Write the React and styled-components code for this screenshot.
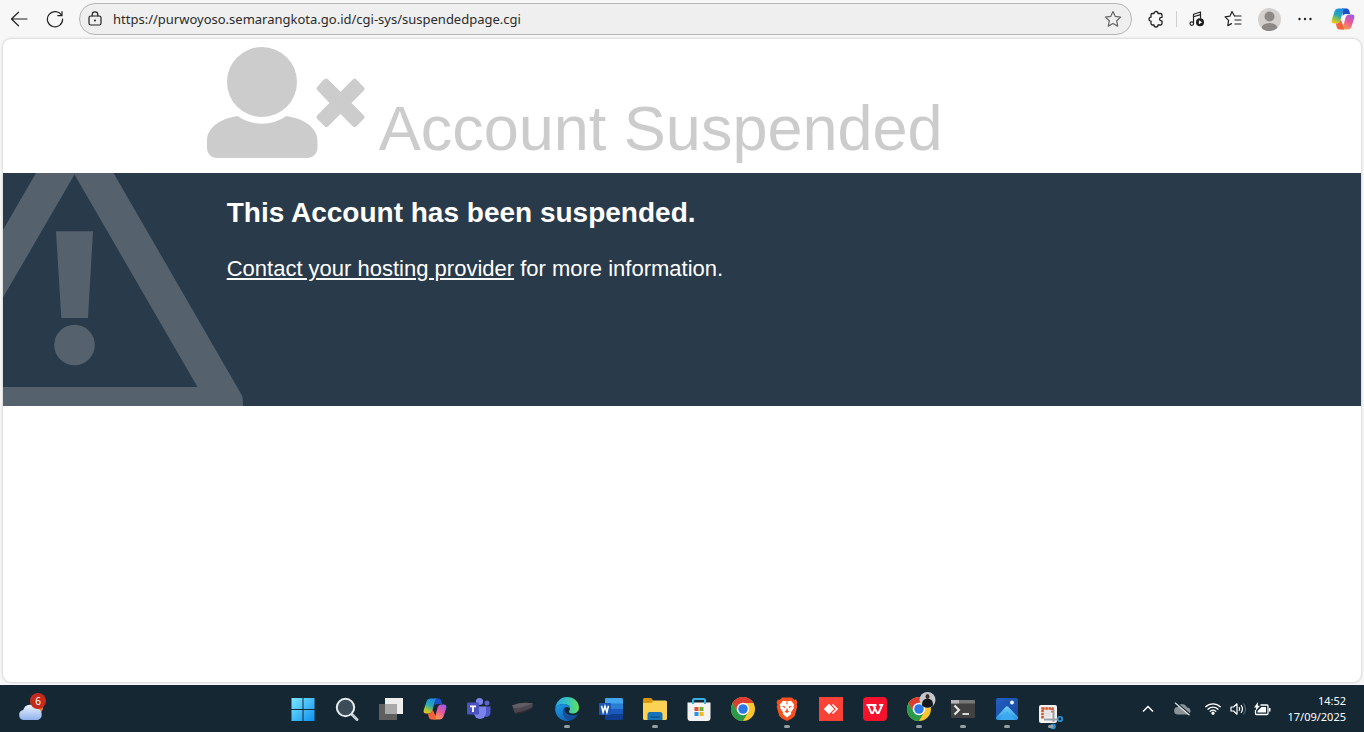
import React, { useState } from 'react';
import styled, { createGlobalStyle } from 'styled-components';

// Global style
const GlobalStyle = createGlobalStyle`
  * {
    box-sizing: border-box;
  }
  body {
    margin: 0;
    background-color: #f7f7f7;
    font-family: 'Liberation Sans', Arial, sans-serif;
  }
  svg {
    display: block;
    flex-shrink: 0;
  }
`;

// Styled components
const Desktop = styled.div`
  display: flex;
  flex-direction: column;
  min-height: 100vh;
`;

const Toolbar = styled.header`
  display: flex;
  align-items: center;
  height: 38px;
  padding: 0 1px 0 5px;
`;

const ToolButton = styled.button`
  display: flex;
  align-items: center;
  justify-content: center;
  width: ${({ $width }) => $width || 36}px;
  height: 28px;
  padding: 0;
  border: none;
  border-radius: 4px;
  background: none;
  color: #222;
  flex-shrink: 0;
`;

const AddressBar = styled.div`
  display: flex;
  align-items: center;
  flex: 1;
  height: 32px;
  margin: 0 6px 0 2px;
  padding: 0 4px 0 0;
  border: 1px solid #b5b5b5;
  border-radius: 16px;
  background-color: #efefef;
`;

const AddressInput = styled.input`
  flex: 1;
  min-width: 0;
  padding: 0 0 0 3px;
  border: none;
  outline: none;
  background: none;
  color: #2b2b2b;
  font-family: 'Noto Sans', 'Open Sans', sans-serif;
  font-size: 13px;
`;

const Divider = styled.span`
  width: 1px;
  height: 16px;
  margin: 0 2px;
  background-color: #cfcfcf;
`;

const PageCard = styled.main`
  flex: 1;
  margin: 1px 3px 3px;
  overflow: hidden;
  border-radius: 8px;
  background-color: #fff;
  box-shadow: 0 0 3px rgba(0, 0, 0, 0.25);
`;

const PageHead = styled.div`
  display: flex;
  align-items: flex-end;
  gap: 13px;
  height: 134px;
  padding: 0 15% 15px;
  color: #ccc;
`;

const PageTitle = styled.h1`
  margin: 0;
  font-size: 63px;
  font-weight: 400;
  line-height: 60px;
  white-space: nowrap;
`;

const InfoBand = styled.section`
  position: relative;
  min-height: 233px;
  padding: 24px 15% 24px;
  overflow: hidden;
  background-color: #293a4a;
  color: #fff;
`;

const WarningMark = styled.svg`
  position: absolute;
  left: 0;
  top: 0;
`;

const InfoText = styled.div`
  position: relative;
  padding-left: 20px;
`;

const InfoHeading = styled.h2`
  margin: 0 0 24px;
  font-size: 28px;
  line-height: 32px;
`;

const InfoLine = styled.p`
  margin: 0;
  font-size: 22px;
  line-height: 32px;
`;

const HostLink = styled.a`
  color: #fff;
  text-decoration: underline;
`;

const Taskbar = styled.footer`
  display: grid;
  grid-template-columns: 1fr auto 1fr;
  align-items: center;
  height: 47px;
  padding: 0 18px 0 16px;
  background-color: #142733;
`;

const WeatherButton = styled.button`
  justify-self: start;
  padding: 0;
  border: none;
  background: none;
`;

const AppList = styled.nav`
  display: flex;
  margin-right: 8px;
`;

const AppButton = styled.button`
  display: flex;
  flex-direction: column;
  align-items: center;
  gap: 4px;
  width: 44px;
  height: 47px;
  padding: 12px 0 0;
  border: none;
  background: none;

  &::after {
    content: '';
    width: 6px;
    height: 3px;
    border-radius: 2px;
    background-color: ${({ $running }) => ($running ? '#95a0a6' : 'transparent')};
  }
`;

const Tray = styled.div`
  display: flex;
  align-items: center;
  justify-self: end;
`;

const TrayButton = styled.button`
  display: flex;
  align-items: center;
  justify-content: center;
  width: ${({ $width }) => $width || 24}px;
  height: 32px;
  padding: 0;
  border: none;
  background: none;
`;

const Clock = styled.time`
  margin-left: 13px;
  color: #fff;
  font-family: 'Noto Sans', 'Open Sans', sans-serif;
  font-size: 11px;
  line-height: 16px;
  text-align: right;
`;

// Toolbar icons
const Line = ({ size = 18, width = size, height = size, box, children }) => (
  <svg
    width={width}
    height={height}
    viewBox={box || `0 0 ${width} ${height}`}
    fill="none"
    stroke="currentColor"
    strokeWidth="1.2"
    strokeLinecap="round"
    strokeLinejoin="round"
  >
    {children}
  </svg>
);

const BackIcon = () => (
  <Line>
    <path d="M17 9H1.5M8.500 2.200L1.500 9l7 6.800" />
  </Line>
);

const ReloadIcon = () => (
  <Line>
    <path d="M15.600 5.500A7.600 7.600 0 1 0 16.600 9M16 1.500v4.200h-4.200" />
  </Line>
);

const LockIcon = () => (
  <Line width={14} height={16}>
    <rect x="1" y="5" width="12" height="9" rx="1.800" />
    <path d="M4.200 5V3.600a2.800 2.800 0 0 1 5.600 0V5" />
    <circle cx="7" cy="9.500" r="1" fill="currentColor" stroke="none" />
  </Line>
);

const StarIcon = () => (
  <Line>
    <path
      stroke="#666"
      d="M9 1.500l2.300 4.900 5.300.7-3.900 3.700 1 5.300L9 13.500l-4.700 2.600 1-5.300L1.400 7.100l5.300-.7z"
    />
  </Line>
);

// pieces bulge out at the top and bottom, and bite in at the right
const ExtensionIcon = () => (
  <Line>
    <path
      strokeWidth="1.300"
      d="M7 3.500a2 2 0 0 1 4 0h2.500A1.500 1.500 0 0 1 15 5v2.300h-.6a1.800 1.800 0 0 0 0 3.600h.6v2.600a1.500 1.500 0 0 1-1.500 1.500H11a2 2 0 0 1-4 0H5.500A1.500 1.500 0 0 1 4 13.500v-2.300a2 2 0 0 1 0-4V5a1.500 1.500 0 0 1 1.500-1.500z"
    />
  </Line>
);

const MediaIcon = () => (
  <Line>
    <path d="M5.500 13V4.200L12.500 2v6M5.500 6.800l7-2.200" />
    <circle cx="3.800" cy="13.600" r="1.800" />
    <circle cx="12" cy="12.200" r="4" fill="#1c1c1c" stroke="none" />
    <path d="M10.900 10.200v4l3.200-2z" fill="#fff" stroke="none" />
  </Line>
);

const FavoritesIcon = () => (
  <Line>
    <path d="M10.500 6L8 1.500 5.900 6.200l-4.800.7 3.500 3.500-.8 5.200L7.500 13.600M10.500 6h6.500M11 10h6M11 14h6" />
  </Line>
);

const AvatarIcon = () => (
  <svg width="23" height="23" viewBox="0 0 23 23">
    <clipPath id="avatarClip">
      <circle cx="11.500" cy="11.500" r="11.500" />
    </clipPath>
    <g clipPath="url(#avatarClip)">
      <rect width="23" height="23" fill="#d3d0cd" />
      <circle cx="11.500" cy="8.500" r="5" fill="#8b8885" />
      <ellipse cx="11.500" cy="20.500" rx="8" ry="5.500" fill="#8b8885" />
    </g>
  </svg>
);

const MoreIcon = () => (
  <svg width="16" height="4" viewBox="0 0 16 4" fill="#222">
    <circle cx="2.500" cy="2" r="1.200" />
    <circle cx="8" cy="2" r="1.200" />
    <circle cx="13.500" cy="2" r="1.200" />
  </svg>
);

const CopilotIcon = ({ id }) => (
  <svg width="24" height="24" viewBox="0 0 24 24">
    <defs>
      <linearGradient id={`${id}a`} x1="0.600" y1="0" x2="0.200" y2="1">
        <stop offset="0" stopColor="#1b8ee8" />
        <stop offset="0.450" stopColor="#2ba7b5" />
        <stop offset="0.700" stopColor="#8bc34a" />
        <stop offset="1" stopColor="#f4c81f" />
      </linearGradient>
      <linearGradient id={`${id}b`} x1="0.800" y1="0" x2="0.300" y2="1">
        <stop offset="0" stopColor="#9a5cf0" />
        <stop offset="0.450" stopColor="#e8569c" />
        <stop offset="1" stopColor="#ff9a4a" />
      </linearGradient>
    </defs>
    <path d="M11 1.500h4.500c1.500 0 2.200.8 2.700 2.200l1 3.300h-4.500c-1.500 0-2.400.8-2.900 2.200z" fill="#1a50c8" />
    <path d="M7.500 1.500h6.800c-1.400.3-2 1.100-2.400 2.500L9.700 12.500c-.7 2.700-1.800 4-4.300 4H3.200c-2.300 0-3-1.600-2.400-3.800L3.500 4.500c.7-2 2-3 4-3z" fill={`url(#${id}a)`} />
    <path d="M16.500 22.500H9.700c1.400-.3 2-1.100 2.400-2.500l2.200-8.500c.7-2.700 1.800-4 4.300-4h2.200c2.300 0 3 1.600 2.400 3.800l-2.700 8.200c-.7 2-2 3-4 3z" fill={`url(#${id}b)`} />
    <path d="M13 22.500H8.500c-1.500 0-2.200-.8-2.700-2.200l-1-3.800h1c2.200 0 3.200-1.400 3.900-4l2.600 6z" fill="#f0643c" />
  </svg>
);

// Drawings on the suspended page
const UserTimesIcon = () => (
  <svg width="159" height="111" viewBox="0 0 159 111" fill="#ccc">
    <circle cx="55" cy="35" r="35" />
    <path d="M30.500 69A43 43 0 0 0 79.500 69C98 72 110.500 81 110.500 94v6.500c0 6-4.500 10.500-10.500 10.500H10C4 111 0 106.500 0 100.500V94c0-13 12-22 30.500-25z" />
    <path d="M117.500 32.600a3 3 0 0 0-.8 0l-6.300 7.100a2.500 2.500 0 0 0 0 3.600L122.500 56l-12.200 12.300a2.500 2.500 0 0 0 0 3.600l7.300 7.300a2.500 2.500 0 0 0 3.600 0L133.500 67l12.300 12.200a2.500 2.500 0 0 0 3.600 0l7.300-7.300a2.500 2.500 0 0 0 0-3.600L144.500 56l12.200-12.300a2.500 2.500 0 0 0 0-3.600l-7.300-7.600a2.500 2.500 0 0 0-3.600 0L133.500 44.800 121.200 32.600a2.500 2.500 0 0 0-3.700 0z" />
  </svg>
);

const WarningIcon = () => (
  <WarningMark width="241" height="233" viewBox="0 0 241 233" fill="#55626e">
    <path
      fillRule="evenodd"
      d="M33 0h77.500L239 222.500q1 3 1 10.500H0v-19h194.500L71.500 1.500 0 124.500V57z"
    />
    <path d="M53 58.300h37L85 145H58.300z" />
    <circle cx="71.500" cy="172" r="20.300" />
  </WarningMark>
);

// Taskbar drawings
const WeatherIcon = () => (
  <svg width="32" height="32" viewBox="0 0 32 32">
    <defs>
      <linearGradient id="cloud" x1="0" y1="0" x2="0" y2="1">
        <stop offset="0" stopColor="#eef4ff" />
        <stop offset="1" stopColor="#8fb2ec" />
      </linearGradient>
    </defs>
    <circle cx="22" cy="15" r="5" fill="#f0792b" />
    <path d="M8 27a5 5 0 0 1-.8-9.900A7.500 7.500 0 0 1 21 15.600 6 6 0 0 1 22 27z" fill="url(#cloud)" />
    <circle cx="22" cy="8" r="8" fill="#c42b1c" />
    <text x="22" y="12" fill="#fff" fontSize="10" fontFamily="Noto Sans" textAnchor="middle">
      6
    </text>
  </svg>
);

const StartIcon = () => (
  <svg width="24" height="24" viewBox="0 0 24 24">
    <linearGradient id="start" x1="0" y1="0" x2="24" y2="24" gradientUnits="userSpaceOnUse">
      <stop offset="0" stopColor="#7eeaff" />
      <stop offset="1" stopColor="#0c8ff0" />
    </linearGradient>
    <path d="M.5 1h11v11h-11zM12.500 1h11v11h-11zM.5 13h11v11h-11zM12.500 13h11v11h-11z" fill="url(#start)" />
  </svg>
);

const SearchIcon = () => (
  <svg width="24" height="24" viewBox="0 0 24 24">
    <path d="M17 17.500l5 5" stroke="#c5ccd2" strokeWidth="3" strokeLinecap="round" />
    <circle cx="10.500" cy="10.500" r="8.700" fill="#3c4c58" stroke="#e6ebef" strokeWidth="2" />
  </svg>
);

const TaskViewIcon = () => (
  <svg width="24" height="24" viewBox="0 0 24 24">
    <path d="M6 1h18v16H6z" fill="#eee" />
    <path d="M0 7h18v16H0z" fill="#5f5f5f" />
    <path d="M6 7h12v10H6z" fill="#a9a9a9" />
  </svg>
);

const TeamsIcon = () => (
  <svg width="24" height="24" viewBox="0 0 24 24">
    <circle cx="20" cy="6" r="2.500" fill="#5b62c8" />
    <circle cx="12.500" cy="4.500" r="3.600" fill="#7b83eb" />
    <path d="M17 9.500h6.500V16a4 4 0 0 1-6.500 3z" fill="#5059c9" />
    <path d="M7 9.500h12V16a6 6 0 0 1-12 0z" fill="#7b83eb" />
    <rect y="5.500" width="12" height="12" rx="1" fill="#4b53bc" />
    <path d="M3 8.500h6v1.700H6.900V15H5.100v-4.800H3z" fill="#fff" />
  </svg>
);

const LensIcon = () => (
  <svg width="24" height="24" viewBox="0 0 24 24">
    <path d="M1 8.500Q10 4.500 22 6.500l-1 4.500-8 3.500-9 2z" fill="#4a454e" />
    <path d="M1 8.500Q10 4.500 22 6.500L10 10.500 3 11z" fill="#625c66" />
    <path d="M4 16l9-2 8-3.500-1 2.500-8 3-7 1.500z" fill="#2b2a32" />
  </svg>
);

const EdgeIcon = () => (
  <svg width="24" height="24" viewBox="0 0 24 24">
    <defs>
      <linearGradient id="edgeTop" x1="0" y1="0.500" x2="1" y2="0.500">
        <stop offset="0" stopColor="#2aa5e2" />
        <stop offset="0.500" stopColor="#36c4c4" />
        <stop offset="1" stopColor="#62e05c" />
      </linearGradient>
      <linearGradient id="edgeLow" x1="0" y1="0" x2="0.600" y2="1">
        <stop offset="0" stopColor="#1b9de2" />
        <stop offset="1" stopColor="#1068be" />
      </linearGradient>
    </defs>
    <path d="M.3 11C1 4.800 5.700 0 12 0c7 0 12 5 12 10.500 0 4-3 6-6.500 6-2.500 0-3.500-1-3.500-2 0-.8 1-1.200 1-3 0-2.500-2.800-4.500-6.500-4.500C4.800 7 2 8.500.3 11z" fill="url(#edgeTop)" />
    <path d="M.3 11C2 8.500 4.800 7 8.500 7c3.700 0 6.500 2 6.500 4.500-1-1-2.400-1.500-4-1.500-2 1-3 2.700-3 5 0 4 3 7.500 7 8.600-1 .3-2 .4-3 .4C5 24-.5 18 .3 11z" fill="url(#edgeLow)" />
    <path d="M11 10c-2 1-3 2.700-3 5 0 4 3 7.500 7 8.600 3.300-.8 6-3 7.500-5.600.3-.6-.2-.9-.7-.6-1.300.6-2.500.8-4 .8-4.500 0-8-2.500-8-6 0-.8.500-1.700 1.200-2.200z" fill="#124f9c" />
  </svg>
);

const WordIcon = () => (
  <svg width="24" height="24" viewBox="0 0 24 24">
    <path d="M7 1h15.500A1.500 1.500 0 0 1 24 2.500V7H6V2a1 1 0 0 1 1-1z" fill="#41a5ee" />
    <path d="M6 6.500h18V12H6z" fill="#2b7cd3" />
    <path d="M6 12h18v5.500H6z" fill="#185abd" />
    <path d="M6 17.500h18v4a1.500 1.500 0 0 1-1.500 1.500H7a1 1 0 0 1-1-1z" fill="#103f91" />
    <rect y="6" width="12" height="12" rx="1" fill="#1a56b0" />
    <path d="M2.500 8.800l1.600 6.400L6 9.300l1.900 5.900 1.600-6.400" fill="none" stroke="#fff" strokeWidth="1.600" />
  </svg>
);

const FolderIcon = () => (
  <svg width="24" height="24" viewBox="0 0 24 24">
    <path d="M0 2.500A1.500 1.500 0 0 1 1.500 1H8l2.500 2.500V8H0z" fill="#d9960f" />
    <path d="M0 6h8.500l2-2.500h12A1.500 1.500 0 0 1 24 5v16.500a1.500 1.500 0 0 1-1.500 1.500h-21A1.500 1.500 0 0 1 0 21.500z" fill="#fcd255" />
    <path d="M4.500 23v-5.500A2.500 2.500 0 0 1 7 15h10a2.500 2.500 0 0 1 2.500 2.500V23z" fill="#1673b8" />
    <path d="M7.500 19h9v2h-9z" fill="#0f5a98" />
  </svg>
);

const StoreIcon = () => (
  <svg width="24" height="24" viewBox="0 0 24 24">
    <path d="M6 7V3.500A1.500 1.500 0 0 1 7.500 2h9A1.500 1.500 0 0 1 18 3.500V7" fill="none" stroke="#35b1e8" strokeWidth="2" />
    <path d="M.5 5.500h23V21a3 3 0 0 1-3 3h-17a3 3 0 0 1-3-3z" fill="#f3f3f3" />
    <path d="M6 2.500V7M18 2.500V7" stroke="#35b1e8" strokeWidth="2" />
    <path d="M7.500 10h4v4h-4z" fill="#e0502c" />
    <path d="M12.500 10h4v4h-4z" fill="#74b02c" />
    <path d="M7.500 15h4v4h-4z" fill="#2795e0" />
    <path d="M12.500 15h4v4h-4z" fill="#f5b81f" />
  </svg>
);

const ChromeShape = () => (
  <>
    <circle cx="12" cy="12" r="12" fill="#fbc52d" />
    <path d="M1.600 6A12 12 0 0 0 12 24l5.200-9L12 12 6.800 15z" fill="#2a9a4a" />
    <path d="M1.600 6L6.500 14 12 6z" fill="#2a9a4a" />
    <path d="M12 6H1.600A12 12 0 0 1 22.400 6z" fill="#dd3d31" />
    <path d="M1.600 6l3.600 6.200L12 6z" fill="#dd3d31" />
    <circle cx="12" cy="12" r="6.200" fill="#fff" />
    <circle cx="12" cy="12" r="4.800" fill="#2e78e6" />
  </>
);

const ChromeIcon = () => (
  <svg width="24" height="24" viewBox="0 0 24 24">
    <ChromeShape />
  </svg>
);

const ChromeProfileIcon = () => (
  <svg width="24" height="24" viewBox="0 0 24 24" overflow="visible">
    <ChromeShape />
    <circle cx="20.500" cy="3" r="8" fill="#c3c8cc" />
    <path d="M15 8.500c0-4 1-6 3.500-6.500h4c2.500.5 3.500 2.500 3.500 6.500a8 8 0 0 1-11 0z" fill="#15161a" />
    <ellipse cx="20.500" cy="-.5" rx="2" ry="2.500" fill="#3a2c28" />
  </svg>
);

const BraveIcon = () => (
  <svg width="24" height="24" viewBox="0 0 24 24">
    <path d="M7 .5h10l2 2.200 2.200-.2 1.300 3-.8 2 .6 2.200-2.600 9.300-2.700 2.500L12 24l-5-2.500L4.300 19 1.700 9.700l.6-2.200-.8-2 1.300-3 2.200.2z" fill="#f4511e" />
    <path d="M12 4.500l4-.8 3.200 3.800-.7 2.300.4 1.200-3 4.500.4 1.600L12 20.500l-4.300-3.400.4-1.600-3-4.500.4-1.200-.7-2.300L8 3.700z" fill="#fff" />
    <path d="M6.800 8.800l3.600.8-.8 1.700zM17.200 8.800l-3.600.8.8 1.700zM12 10.500l1 3.200 1.500.8L12 16l-2.500-1.500 1.500-.8zM11 5.500h2L12 8z" fill="#f4511e" />
  </svg>
);

const AnyDeskIcon = () => (
  <svg width="24" height="24" viewBox="0 0 24 24">
    <path d="M0 0h24v24H0z" fill="#fb4237" />
    <path d="M10 6.800l5.200 5.200-5.200 5.200L4.800 12z" fill="#fff" />
    <path d="M13.500 7.500L18 12l-4.500 4.500" fill="none" stroke="#fff" strokeWidth="1.600" />
  </svg>
);

const WpsIcon = () => (
  <svg width="24" height="24" viewBox="0 0 24 24">
    <rect width="24" height="24" rx="4" fill="#f5122c" />
    <path d="M3.500 8h10M5 8l3.400 8h1.400l2.700-6.500M10 8l4.200 8h1.400l3.600-8H16" fill="none" stroke="#fff" strokeWidth="1.900" />
  </svg>
);

const TerminalIcon = () => (
  <svg width="24" height="24" viewBox="0 0 24 24">
    <rect y="3" width="24" height="18" rx="1" fill="#414141" />
    <path d="M0 4a1 1 0 0 1 1-1h22a1 1 0 0 1 1 1v2.500H0z" fill="#777" />
    <path d="M0 3h8v3.500H0z" fill="#b5b5b5" />
    <path d="M3.500 8.500L8 13l-4.500 4.500" fill="none" stroke="#ececec" strokeWidth="2" />
    <path d="M11.500 17h6.500" stroke="#ececec" strokeWidth="1.800" />
  </svg>
);

const PhotosIcon = () => (
  <svg width="24" height="24" viewBox="0 0 24 24">
    <defs>
      <linearGradient id="photo" x1="0" y1="0" x2="1" y2="1">
        <stop offset="0" stopColor="#235fc4" />
        <stop offset="1" stopColor="#1a4697" />
      </linearGradient>
      <linearGradient id="photoHill" x1="0" y1="0" x2="0" y2="1">
        <stop offset="0" stopColor="#6fd4fa" />
        <stop offset="1" stopColor="#2a8fe0" />
      </linearGradient>
    </defs>
    <rect x="1" y="1" width="22" height="22" rx="2" fill="url(#photo)" />
    <path d="M1 20.500L10.500 10q1.500-1.500 3 0L23 20v1a2 2 0 0 1-2 2H3a2 2 0 0 1-2-2z" fill="url(#photoHill)" />
    <path d="M4 23l8-8.500L20.500 23z" fill="#3aa9ee" />
    <circle cx="17" cy="5.500" r="2" fill="#eaf4ff" />
  </svg>
);

const SnippingIcon = () => (
  <svg width="24" height="24" viewBox="0 0 24 24" overflow="visible">
    <rect x="0" y="8" width="18" height="18" rx="2" fill="#f2f2f2" />
    <path d="M3.500 21.500v-10h10v4" fill="none" stroke="#d5532b" strokeWidth="2.600" strokeDasharray="2.600 .6" />
    <path d="M5 13h7v7H5z" fill="#e4e4e4" />
    <path d="M14.500 13v12M5 22.500h14" stroke="#9aa1a6" strokeWidth="2" />
    <circle cx="21" cy="22" r="2.200" fill="none" stroke="#2b9be0" strokeWidth="1.600" />
    <circle cx="14" cy="29.500" r="2" fill="none" stroke="#2b9be0" strokeWidth="1.600" />
  </svg>
);

// Tray icons
const ChevronIcon = () => (
  <svg width="12" height="8" viewBox="0 0 12 8">
    <path d="M1 6.500l5-5 5 5" fill="none" stroke="#fff" strokeWidth="1.500" />
  </svg>
);

const CloudOffIcon = () => (
  <svg width="17" height="14" viewBox="0 0 17 14">
    <path d="M4 12.500a3.700 3.700 0 0 1-.3-7.400A5 5 0 0 1 13 5.500a3.500 3.500 0 0 1 0 7z" fill="#8a9398" />
    <path d="M2.500 .8l14 12" stroke="#142733" strokeWidth="1.500" />
    <path d="M1 .8l14.500 12.400" stroke="#dde2e5" strokeWidth="1.200" />
  </svg>
);

const WifiIcon = () => (
  <svg width="16" height="13" viewBox="0 0 16 13" fill="none" stroke="#fff" strokeWidth="1.300" strokeLinecap="round">
    <path d="M.8 4.800a10.200 10.200 0 0 1 14.400 0M3 7.200a7 7 0 0 1 10 0M5.200 9.400a4 4 0 0 1 5.600 0" />
    <circle cx="8" cy="11.200" r="1" fill="#fff" />
  </svg>
);

const VolumeIcon = () => (
  <svg width="17" height="14" viewBox="0 0 17 14" fill="none" stroke="#fff" strokeWidth="1.200" strokeLinejoin="round">
    <path d="M1 5h2.500L7 1.800v10.400L3.500 9H1z" />
    <path d="M9 5q1.500 2 0 4M11 3.200q3 3.800 0 7.600" />
    <path d="M13.500 1.500q4 5.500 0 11" stroke="#56646d" />
  </svg>
);

const BatteryIcon = () => (
  <svg width="17" height="14" viewBox="0 0 17 14">
    <path d="M6.500 3H13a1 1 0 0 1 1 1v7.500a1 1 0 0 1-1 1H2.500a1 1 0 0 1-1-1V8" fill="none" stroke="#fff" strokeWidth="1.300" />
    <path d="M7.500 5H12v5.500H3.500V9z" fill="#fff" />
    <path d="M15 6h1.500v3.500H15z" fill="#fff" />
    <path d="M4 0L0 5.500h2.300L1.500 9 6 3.700H3.700z" fill="#fff" />
  </svg>
);

const apps = [
  { name: 'Start', icon: <StartIcon /> },
  { name: 'Search', icon: <SearchIcon /> },
  { name: 'Task view', icon: <TaskViewIcon /> },
  { name: 'Copilot', icon: <CopilotIcon id="taskCopilot" /> },
  { name: 'Teams', icon: <TeamsIcon /> },
  { name: 'Lens', icon: <LensIcon /> },
  { name: 'Edge', icon: <EdgeIcon />, running: true },
  { name: 'Word', icon: <WordIcon /> },
  { name: 'File Explorer', icon: <FolderIcon />, running: true },
  { name: 'Store', icon: <StoreIcon /> },
  { name: 'Chrome', icon: <ChromeIcon /> },
  { name: 'Brave', icon: <BraveIcon />, running: true },
  { name: 'AnyDesk', icon: <AnyDeskIcon /> },
  { name: 'WPS Office', icon: <WpsIcon /> },
  { name: 'Chrome profile', icon: <ChromeProfileIcon />, running: true },
  { name: 'Terminal', icon: <TerminalIcon />, running: true },
  { name: 'Photos', icon: <PhotosIcon />, running: true },
  { name: 'Snipping Tool', icon: <SnippingIcon />, running: true },
];

export default function App() {
  const [address, setAddress] = useState(
    'https://purwoyoso.semarangkota.go.id/cgi-sys/suspendedpage.cgi'
  );

  return (
    <Desktop>
      <GlobalStyle />
      <Toolbar>
        <ToolButton $width={28} aria-label="Back">
          <BackIcon />
        </ToolButton>
        <ToolButton $width={44} aria-label="Reload">
          <ReloadIcon />
        </ToolButton>
        <AddressBar>
          <ToolButton $width={30} aria-label="Site information">
            <LockIcon />
          </ToolButton>
          <AddressInput
            aria-label="Address"
            value={address}
            onChange={(event) => setAddress(event.target.value)}
          />
          <ToolButton $width={28} aria-label="Add to favorites">
            <StarIcon />
          </ToolButton>
        </AddressBar>
        <ToolButton aria-label="Extensions">
          <ExtensionIcon />
        </ToolButton>
        <Divider />
        <ToolButton aria-label="Media">
          <MediaIcon />
        </ToolButton>
        <ToolButton aria-label="Favorites">
          <FavoritesIcon />
        </ToolButton>
        <ToolButton aria-label="Profile">
          <AvatarIcon />
        </ToolButton>
        <ToolButton aria-label="Settings and more">
          <MoreIcon />
        </ToolButton>
        <ToolButton $width={40} aria-label="Copilot">
          <CopilotIcon id="barCopilot" />
        </ToolButton>
      </Toolbar>

      <PageCard>
        <PageHead>
          <UserTimesIcon />
          <PageTitle>Account Suspended</PageTitle>
        </PageHead>
        <InfoBand>
          <WarningIcon />
          <InfoText>
            <InfoHeading>This Account has been suspended.</InfoHeading>
            <InfoLine>
              <HostLink href="#contact">Contact your hosting provider</HostLink> for more
              information.
            </InfoLine>
          </InfoText>
        </InfoBand>
      </PageCard>

      <Taskbar>
        <WeatherButton aria-label="Weather">
          <WeatherIcon />
        </WeatherButton>
        <AppList>
          {apps.map((app) => (
            <AppButton key={app.name} aria-label={app.name} $running={app.running}>
              {app.icon}
            </AppButton>
          ))}
        </AppList>
        <Tray>
          <TrayButton $width={32} aria-label="Show hidden icons">
            <ChevronIcon />
          </TrayButton>
          <TrayButton $width={36} aria-label="OneDrive">
            <CloudOffIcon />
          </TrayButton>
          <TrayButton $width={26} aria-label="Network">
            <WifiIcon />
          </TrayButton>
          <TrayButton aria-label="Volume">
            <VolumeIcon />
          </TrayButton>
          <TrayButton aria-label="Battery">
            <BatteryIcon />
          </TrayButton>
          <Clock>
            14:52
            <br />
            17/09/2025
          </Clock>
        </Tray>
      </Taskbar>
    </Desktop>
  );
}
